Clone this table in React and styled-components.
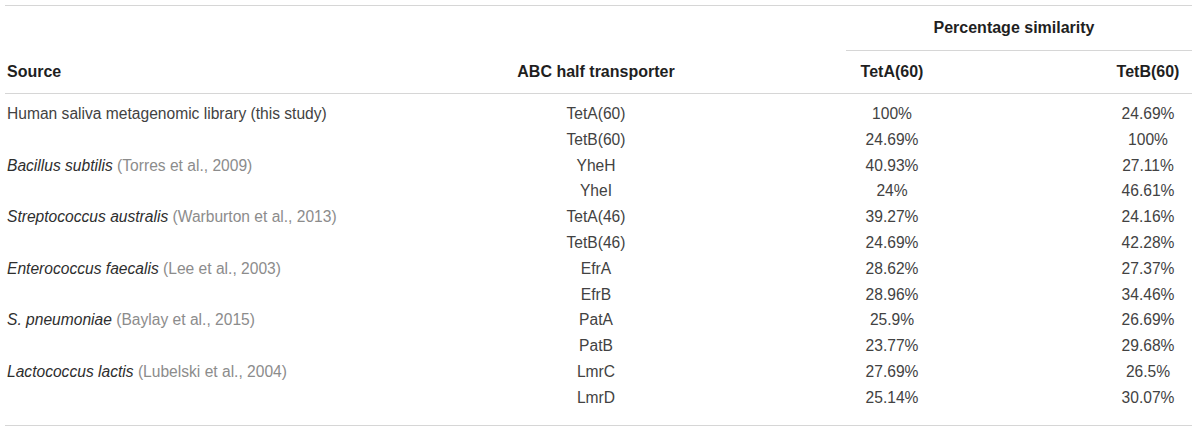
import styled, { createGlobalStyle } from "styled-components";

const GlobalStyle = createGlobalStyle`
    body {
        margin: 0;
        background: #ffffff;
        font-family: "Liberation Sans", Arial, Helvetica, sans-serif;
    }
`

const Table = styled.table`
    margin: 5px 0 0 5px;
    width: 1187px;
    table-layout: fixed;
    border-collapse: collapse;
    border-top: 1px solid #d6d6d6;
    font-size: 15.6px;
    color: #424242;
`
const HeadCell = styled.th`
    height: ${(p) => p.$height}px;
    padding: 0 ${(p) => p.$padRight || 0}px 0 ${(p) => p.$padLeft || 0}px;
    text-align: ${(p) => p.$align || "center"};
    vertical-align: middle;
    font-size: 16px;
    font-weight: bold;
    color: #1f1f1f;
    white-space: nowrap;
    border-bottom: ${(p) => (p.$line ? "1px solid #d6d6d6" : "none")};
`
const Body = styled.tbody`
    tr:first-child td {
        padding-top: 7px;
    }
    tr:last-child td {
        padding-bottom: 14px;
        border-bottom: 1px solid #d6d6d6;
    }
`
const Cell = styled.td`
    padding: 0 ${(p) => p.$padRight || 0}px 0 ${(p) => p.$padLeft || 0}px;
    line-height: 25.8px;
    text-align: ${(p) => p.$align || "center"};
    white-space: nowrap;
`
const Species = styled.i`
    color: #2e2e2e;
`
const Cite = styled.span`
    color: #8c8c8c;
`

const rows = [
    { source: <>Human saliva metagenomic library (this study)</>, abc: "TetA(60)", a: "100%", b: "24.69%" },
    { abc: "TetB(60)", a: "24.69%", b: "100%" },
    { species: "Bacillus subtilis", cite: "(Torres et al., 2009)", abc: "YheH", a: "40.93%", b: "27.11%" },
    { abc: "YheI", a: "24%", b: "46.61%" },
    { species: "Streptococcus australis", cite: "(Warburton et al., 2013)", abc: "TetA(46)", a: "39.27%", b: "24.16%" },
    { abc: "TetB(46)", a: "24.69%", b: "42.28%" },
    { species: "Enterococcus faecalis", cite: "(Lee et al., 2003)", abc: "EfrA", a: "28.62%", b: "27.37%" },
    { abc: "EfrB", a: "28.96%", b: "34.46%" },
    { species: "S. pneumoniae", cite: "(Baylay et al., 2015)", abc: "PatA", a: "25.9%", b: "26.69%" },
    { abc: "PatB", a: "23.77%", b: "29.68%" },
    { species: "Lactococcus lactis", cite: "(Lubelski et al., 2004)", abc: "LmrC", a: "27.69%", b: "26.5%" },
    { abc: "LmrD", a: "25.14%", b: "30.07%" },
]

function App() {
    return (
        <>
            <GlobalStyle />
            <Table>
                <colgroup>
                    <col style={{ width: 511 }} />
                    <col style={{ width: 330 }} />
                    <col style={{ width: 258 }} />
                    <col style={{ width: 88 }} />
                </colgroup>
                <thead>
                    <tr>
                        <HeadCell $height={44}></HeadCell>
                        <HeadCell $height={44}></HeadCell>
                        <HeadCell $height={44} colSpan={2} $padRight={10} $line>Percentage similarity</HeadCell>
                    </tr>
                    <tr>
                        <HeadCell $height={42} $align="left" $padLeft={2} $line>Source</HeadCell>
                        <HeadCell $height={42} $padRight={170} $line>ABC half transporter</HeadCell>
                        <HeadCell $height={42} $padRight={166} $line>TetA(60)</HeadCell>
                        <HeadCell $height={42} $line>TetB(60)</HeadCell>
                    </tr>
                </thead>
                <Body>
                    {rows.map((r, i) => (
                        <tr key={i}>
                            <Cell $align="left" $padLeft={2}>
                                {r.source}
                                {r.species && (
                                    <>
                                        <Species>{r.species}</Species> <Cite>{r.cite}</Cite>
                                    </>
                                )}
                            </Cell>
                            <Cell $padRight={170}>{r.abc}</Cell>
                            <Cell $padRight={166}>{r.a}</Cell>
                            <Cell>{r.b}</Cell>
                        </tr>
                    ))}
                </Body>
            </Table>
        </>
    )
}

export default App
